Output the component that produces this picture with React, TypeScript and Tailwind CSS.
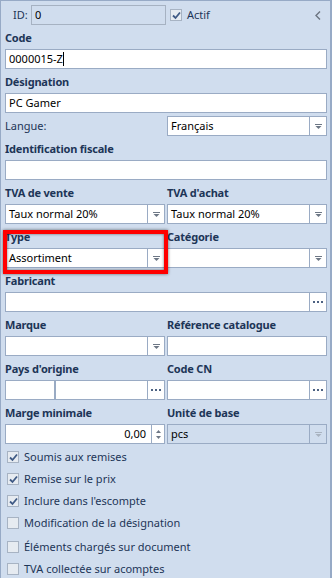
import React from "react";

const FONT = { fontFamily: '"Noto Sans", "Open Sans", sans-serif' };

function Arrow({ disabled = false }: { disabled?: boolean }) {
  const c = disabled ? "#a9b3c0" : "#6d7785";
  return (
    <svg width="7" height="5" viewBox="0 0 7 5">
      <rect x="0" y="0" width="7" height="1" fill={c} />
      <polygon points="0.5,2 6.5,2 3.5,5" fill={c} />
    </svg>
  );
}

function Dots() {
  return (
    <svg width="10" height="2" viewBox="0 0 10 2">
      <rect x="0" y="0" width="2" height="2" fill="#4d6282" />
      <rect x="4" y="0" width="2" height="2" fill="#4d6282" />
      <rect x="8" y="0" width="2" height="2" fill="#4d6282" />
    </svg>
  );
}

function Label({ children }: { children: React.ReactNode }) {
  return (
    <div className="h-[24px] pt-[5px] leading-[16px] text-[11px] font-bold tracking-[-0.2px] text-[#1d3557] whitespace-nowrap">
      {children}
    </div>
  );
}

function Input({ value = "", caret = false }: { value?: string; caret?: boolean }) {
  return (
    <div className="h-[20px] border border-[#9aabc4] bg-white flex items-center px-[3px] text-[11px] text-black leading-[16px] whitespace-nowrap">
      {value}
      {caret && <span className="inline-block w-px h-[14px] bg-black" />}
    </div>
  );
}

function Combo({ value = "", btn = "arrow", disabled = false }: { value?: string; btn?: "arrow" | "dots"; disabled?: boolean }) {
  return (
    <div
      className={
        "h-[20px] border border-[#9aabc4] flex items-stretch text-[11px] leading-[16px] " +
        (disabled ? "bg-[#d0ddee]" : "bg-white")
      }
    >
      <div className="flex-1 flex items-center px-[3px] text-black whitespace-nowrap overflow-hidden">{value}</div>
      <div
        className={
          "w-[17px] border-l border-[#9aabc4] flex items-center justify-center " +
          (disabled ? "bg-[#d0ddee]" : "bg-white")
        }
      >
        {btn === "arrow" ? <Arrow disabled={disabled} /> : <Dots />}
      </div>
    </div>
  );
}

function CheckMark() {
  return (
    <svg width="9" height="9" viewBox="0 0 9 9">
      <path d="M1 4.5 L3.5 7 L8 1.5" stroke="#3f5a85" strokeWidth="1.8" fill="none" />
    </svg>
  );
}

function Check({ checked, label }: { checked: boolean; label: string }) {
  return (
    <div className="flex items-center h-[22px] pl-[2px]">
      <div className="w-[12px] h-[12px] border border-[#a7b3c3] bg-[#e6ebf1] flex items-center justify-center">
        {checked && <CheckMark />}
      </div>
      <span className="ml-[5px] text-[11px] leading-[16px] text-[#1d3557] whitespace-nowrap">{label}</span>
    </div>
  );
}

export default function App() {
  return (
    <div
      style={FONT}
      className="relative w-[332px] h-[578px] overflow-hidden bg-[#d0ddee] border-t border-l border-r-2 border-[#97aac6]"
    >
      <div className="pl-[4px] pr-[3px]">
        {/* ID row */}
        <div className="mt-[4px] flex items-center h-[20px]">
          <span className="ml-[8px] w-[18px] text-[11px] text-[#1d3557] leading-[16px]">ID:</span>
          <div className="w-[135px] h-[20px] border border-[#a6b2c2] flex items-center px-[3px] text-[11px] text-black">
            0
          </div>
          <div className="ml-[4px] w-[12px] h-[12px] border border-[#a7b3c3] bg-[#e6ebf1] flex items-center justify-center">
            <CheckMark />
          </div>
          <span className="ml-[5px] text-[11px] text-[#1d3557]">Actif</span>
          <div className="flex-1" />
          <svg width="6" height="9" viewBox="0 0 6 9" className="mr-[6px]">
            <path d="M5 0.5 L1 4.5 L5 8.5" stroke="#6b7480" strokeWidth="1.4" fill="none" />
          </svg>
        </div>

        <Label>Code</Label>
        <Input value="0000015-Z" caret />
        <Label>Désignation</Label>
        <Input value="PC Gamer" />

        <div className="mt-[3px] grid grid-cols-[160px_160px] gap-x-[2px] items-center">
          <span className="text-[11px] text-[#1d3557] leading-[16px]">Langue:</span>
          <Combo value="Français" />
        </div>

        <Label>Identification fiscale</Label>
        <Input />

        <div className="grid grid-cols-[160px_160px] gap-x-[2px]">
          <div>
            <Label>TVA de vente</Label>
            <Combo value="Taux normal 20%" />
          </div>
          <div>
            <Label>TVA d'achat</Label>
            <Combo value="Taux normal 20%" />
          </div>
          <div>
            <Label>Type</Label>
            <Combo value="Assortiment" />
          </div>
          <div>
            <Label>Catégorie</Label>
            <Combo />
          </div>
        </div>

        <Label>Fabricant</Label>
        <Combo btn="dots" />

        <div className="grid grid-cols-[160px_160px] gap-x-[2px]">
          <div>
            <Label>Marque</Label>
            <Combo />
          </div>
          <div>
            <Label>Référence catalogue</Label>
            <Input />
          </div>
          <div>
            <Label>Pays d'origine</Label>
            <div className="flex">
              <div className="w-[50px] h-[20px] border border-[#9aabc4] bg-white" />
              <div className="flex-1">
                <Combo btn="dots" />
              </div>
            </div>
          </div>
          <div>
            <Label>Code CN</Label>
            <Combo btn="dots" />
          </div>
          <div>
            <Label>Marge minimale</Label>
            <div className="h-[20px] border border-[#9aabc4] bg-white flex items-stretch text-[11px] leading-[16px]">
              <div className="flex-1 flex items-center justify-end pr-[5px] text-black">0,00</div>
              <div className="w-[13px] border-l border-[#9aabc4] flex flex-col items-center justify-center gap-[3px] bg-white">
                <svg width="5" height="3" viewBox="0 0 5 3">
                  <polygon points="0,3 5,3 2.5,0" fill="#6d7785" />
                </svg>
                <svg width="5" height="3" viewBox="0 0 5 3">
                  <polygon points="0,0 5,0 2.5,3" fill="#6d7785" />
                </svg>
              </div>
            </div>
          </div>
          <div>
            <Label>Unité de base</Label>
            <Combo value="pcs" disabled />
          </div>
        </div>

        <div className="mt-[2px]">
          <Check checked label="Soumis aux remises" />
          <Check checked label="Remise sur le prix" />
          <Check checked label="Inclure dans l'escompte" />
          <Check checked={false} label="Modification de la désignation" />
          <div className="mt-[2px]">
            <Check checked={false} label="Éléments chargés sur document" />
          </div>
          <Check checked={false} label="TVA collectée sur acomptes" />
        </div>
      </div>

      {/* highlight annotation */}
      <div className="absolute left-[2px] top-[229px] w-[165px] h-[44px] border-[4px] border-[#ff0000] shadow-[0_0_3px_rgba(0,0,0,0.55),inset_0_0_3px_rgba(0,0,0,0.55)]" />
    </div>
  );
}
